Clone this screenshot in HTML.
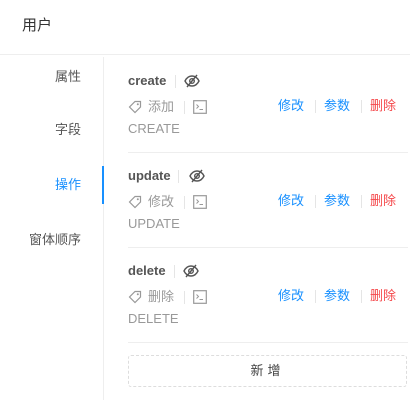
<!DOCTYPE html>
<html><head><meta charset="utf-8"><style>
body{margin:0;width:410px;height:400px;background:#fff;font-family:"Liberation Sans","Noto Sans CJK SC",sans-serif;position:relative;overflow:hidden;font-size:13px;line-height:16px}
.a{position:absolute;white-space:nowrap}
.hdr{left:22px;top:18px;font-size:15px;color:#333}
.hl{left:0;top:54px;width:410px;height:1px;background:#eee}
.vl{left:103px;top:57px;width:1px;height:343px;background:#eee}
.bar{left:102px;top:166px;width:2px;height:38px;background:#1890ff}
.nav{right:329px;font-size:13px;color:#555}
.t{font-size:13px;color:#555;font-weight:bold}
.g{color:#999}
.b{color:#1890ff}.r{color:#f5474a}
.sep{width:1px;height:13px;background:#e5e5e5}
.div{left:128px;width:280px;height:1px;background:#eee}
.btn{left:128px;top:355px;width:277px;height:30px;border:1px dashed #ddd;border-radius:3px;text-align:center;line-height:30px;color:#444;letter-spacing:4px}
</style></head><body>
<div class="a hdr">用户</div>
<div class="a hl"></div>
<div class="a vl"></div>
<div class="a bar"></div>
<div class="a nav" style="top:69px">属性</div>
<div class="a nav" style="top:122px">字段</div>
<div class="a nav" style="top:177px;color:#1890ff">操作</div>
<div class="a nav" style="top:232px">窗体顺序</div>

<div id="s"></div>
<script>
var d=[["create","添加","CREATE"],["update","修改","UPDATE"],["delete","删除","DELETE"]];
var h="";
d.forEach(function(x,i){var o=i*95;
h+='<div class="a t" style="left:128px;top:'+(73+o)+'px">'+x[0]+'</div>';
h+='<div class="a sep" style="left:'+(x[0]=="create"?175:(x[0]=="update"?178:174))+'px;top:'+(75+o)+'px"></div>';
h+='<svg class="a" style="left:'+(x[0]=="create"?184:(x[0]=="update"?189:183))+'px;top:'+(74+o)+'px" width="16" height="14" viewBox="0 0 16 14"><path d="M1 7C3 3 6 2 8 2s5 1 7 5c-2 4-5 5-7 5S3 11 1 7z" fill="none" stroke="#555" stroke-width="1.4"/><circle cx="8" cy="7" r="2.3" fill="none" stroke="#555" stroke-width="1.4"/><path d="M3 13L13 1" stroke="#555" stroke-width="1.4"/></svg>';
h+='<svg class="a" style="left:128px;top:'+(100+o)+'px" width="14" height="14" viewBox="0 0 14 14"><path d="M7 1.5h5.5V7L7 12.5 1.5 7z" fill="none" stroke="#999" stroke-width="1.2"/><circle cx="9.8" cy="4.2" r="1" fill="#999"/></svg>';
h+='<div class="a g" style="left:148px;top:'+(99+o)+'px">'+x[1]+'</div>';
h+='<div class="a sep" style="left:184px;top:'+(101+o)+'px"></div>';
h+='<svg class="a" style="left:193px;top:'+(100+o)+'px" width="14" height="14" viewBox="0 0 14 14"><rect x="0.7" y="0.7" width="12.6" height="12.6" fill="none" stroke="#999" stroke-width="1.2"/><path d="M3.5 4.5l2 2-2 2M6.5 9.5h3.5" fill="none" stroke="#999" stroke-width="1"/></svg>';
h+='<div class="a g" style="left:128px;top:'+(121+o)+'px">'+x[2]+'</div>';
h+='<div class="a b" style="left:278px;top:'+(98+o)+'px">修改</div>';
h+='<div class="a sep" style="left:315px;top:'+(100+o)+'px"></div>';
h+='<div class="a b" style="left:324px;top:'+(98+o)+'px">参数</div>';
h+='<div class="a sep" style="left:361px;top:'+(100+o)+'px"></div>';
h+='<div class="a r" style="left:370px;top:'+(98+o)+'px">删除</div>';
h+='<div class="a div" style="top:'+(152+o)+'px"></div>';
});
document.getElementById("s").innerHTML=h;
</script>
<div class="a btn">新增</div>
</body></html>
